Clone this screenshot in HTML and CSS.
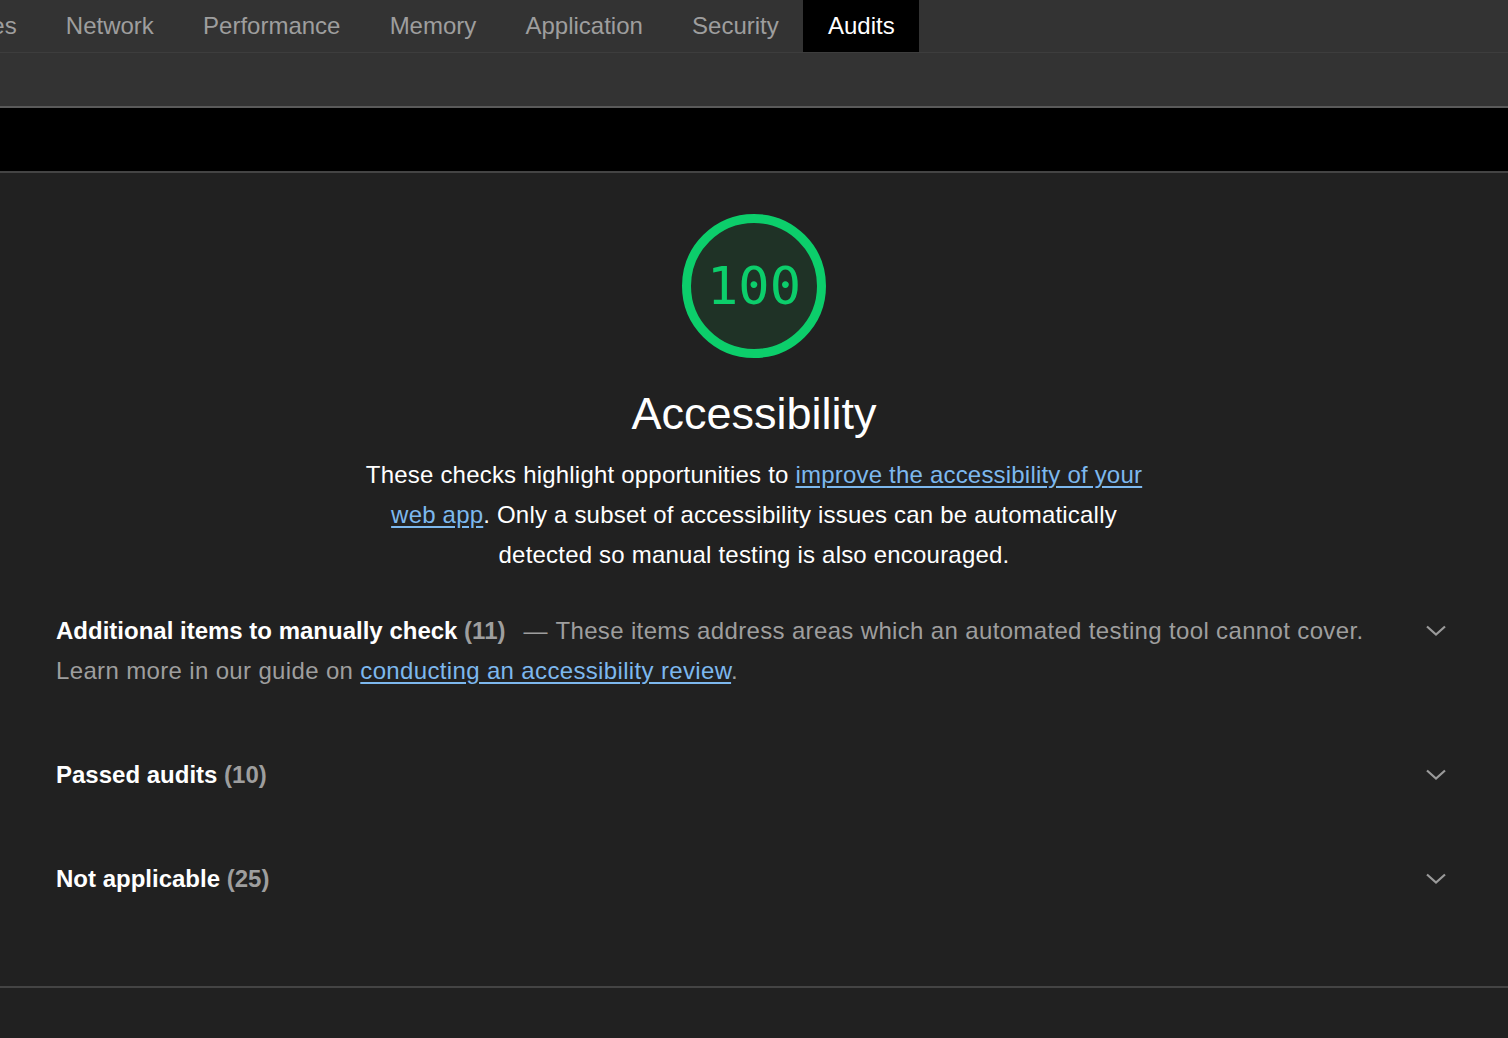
FILE: index.html
```html
<!DOCTYPE html>
<html>
<head>
<meta charset="utf-8">
<link rel="stylesheet" href="styles.css">
</head>
<body>
<div class="tabbar">
  <div class="tabs">
    <div class="tab">Sources</div>
    <div class="tab">Network</div>
    <div class="tab">Performance</div>
    <div class="tab">Memory</div>
    <div class="tab">Application</div>
    <div class="tab">Security</div>
    <div class="tab active">Audits</div>
  </div>
</div>
<div class="toolbar"></div>
<div class="topbar"></div>
<main class="report">
  <div class="gauge">
    <svg class="gauge-svg" width="144" height="144" viewBox="0 0 144 144">
      <circle cx="72" cy="72" r="67.5" fill="#1f3226" stroke="#0cce6b" stroke-width="9"/>
    </svg>
    <span class="gauge-value">100</span>
  </div>
  <h1 class="title">Accessibility</h1>
  <p class="desc">These checks highlight opportunities to <a href="#">improve the accessibility of your web app</a>. Only a subset of accessibility issues can be automatically detected so manual testing is also encouraged.</p>

  <section class="group">
    <div class="group-text"><span class="group-title">Additional items to manually check</span> <span class="count">(11)</span><span class="dash">—</span><span class="group-desc">These items address areas which an automated testing tool cannot cover. Learn more in our guide on <a href="#">conducting an accessibility review</a>.</span></div>
    <svg class="chev" width="24" height="24" viewBox="0 0 24 24"><path d="M3 7.5 L12 15.5 L21 7.5" fill="none" stroke="#9a9a9a" stroke-width="2.2"/></svg>
  </section>
  <section class="group">
    <div class="group-text"><span class="group-title">Passed audits</span> <span class="count">(10)</span></div>
    <svg class="chev" width="24" height="24" viewBox="0 0 24 24"><path d="M3 7.5 L12 15.5 L21 7.5" fill="none" stroke="#9a9a9a" stroke-width="2.2"/></svg>
  </section>
  <section class="group">
    <div class="group-text"><span class="group-title">Not applicable</span> <span class="count">(25)</span></div>
    <svg class="chev" width="24" height="24" viewBox="0 0 24 24"><path d="M3 7.5 L12 15.5 L21 7.5" fill="none" stroke="#9a9a9a" stroke-width="2.2"/></svg>
  </section>
</main>
<div class="bottom"></div>
</body>
</html>
```

FILE: styles.css
```css
html, body {
  margin: 0;
  padding: 0;
  background: #212121;
  font-family: "Liberation Sans", Arial, Helvetica, sans-serif;
  height: 100%;
  overflow: hidden;
}
.tabbar {
  height: 52px;
  background: #333333;
  border-bottom: 1px solid #3d3d3d;
  overflow: hidden;
}
.tabs {
  display: flex;
  margin-left: -96px;
  height: 52px;
}
.tab {
  padding: 0 24.6px;
  height: 52px;
  line-height: 52px;
  font-size: 24px;
  color: #9e9e9e;
  white-space: nowrap;
}
.tab.active {
  background: #000;
  color: #fff;
}
.toolbar {
  height: 53px;
  background: #333333;
  border-bottom: 2px solid #5a5a5a;
}
.topbar {
  height: 63px;
  background: #000;
  border-bottom: 2px solid #444;
}
.report {
  display: flex;
  flex-direction: column;
  align-items: center;
  padding-top: 41px;
  height: 813px;
  box-sizing: border-box;
}
.gauge {
  position: relative;
  width: 144px;
  height: 144px;
}
.gauge-svg {
  display: block;
}
.gauge-value {
  position: absolute;
  left: 0;
  right: 0;
  top: 0;
  line-height: 144px;
  text-align: center;
  font-family: "DejaVu Sans Mono", "Liberation Mono", monospace;
  font-size: 52px;
  color: #0cce6b;
}
.title {
  margin: 31px 0 0;
  font-size: 45px;
  font-weight: normal;
  line-height: 50px;
  color: #fff;
}
.desc {
  margin: 16px 0 0;
  width: 790px;
  text-align: center;
  font-size: 24px;
  letter-spacing: 0.2px;
  line-height: 40px;
  color: #fff;
}
a {
  color: #7db8ee;
  text-decoration: underline;
  text-underline-offset: 3px;
}
.group {
  align-self: stretch;
  display: flex;
  align-items: flex-start;
  padding: 0 60px 0 56px;
  margin-top: 64px;
}
.group:first-of-type {
  margin-top: 36px;
}
.group-text {
  flex: 1;
  font-size: 24px;
  line-height: 40px;
  color: #9e9e9e;
  padding-right: 20px;
}
.group-title {
  font-weight: bold;
  color: #fff;
}
.count {
  color: #9e9e9e;
  font-weight: bold;
}
.dash {
  margin: 0 8px 0 18px;
  color: #9e9e9e;
}
.group-desc {
  letter-spacing: 0.35px;
}
.chev {
  flex: none;
  margin-top: 8px;
}
.bottom {
  border-top: 2px solid #444;
}
```
